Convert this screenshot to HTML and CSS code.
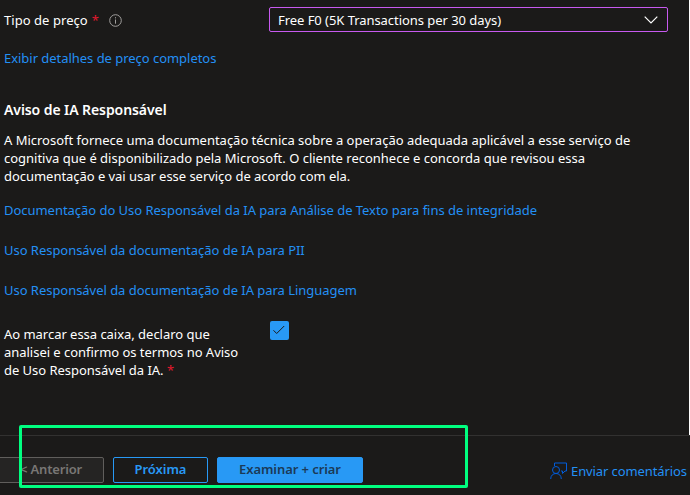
FILE: index.html
```html
<!DOCTYPE html>
<html lang="pt-BR">
<head>
<meta charset="utf-8">
<title>Criar recurso</title>
<link rel="stylesheet" href="styles.css">
</head>
<body>
<main class="content">
  <div class="field">
    <label class="field-label">Tipo de preço <span class="required">*</span>
      <svg class="info" viewBox="0 0 13 13"><circle cx="6.5" cy="6.5" r="5.8"/><path d="M6.5 5.5v4.2M6.5 3.2v1.2"/></svg>
    </label>
    <div class="select"><span class="select-value">Free F0 (5K Transactions per 30 days)</span>
      <svg class="chevron" viewBox="0 0 14 8"><path d="M.7.7 7 7l6.300-6.300"/></svg>
    </div>
  </div>
  <a class="link price">Exibir detalhes de preço completos</a>
  <h2 class="title">Aviso de IA Responsável</h2>
  <p class="notice">A Microsoft fornece uma documentação técnica sobre a operação adequada aplicável a esse serviço de<br>cognitiva que é disponibilizado pela Microsoft. O cliente reconhece e concorda que revisou essa<br><span class="notice-end">documentação e vai usar esse serviço de acordo com ela.</span></p>
  <nav class="docs">
    <a class="link">Documentação do Uso Responsável da IA para Análise de Texto para fins de integridade</a>
    <a class="link">Uso Responsável da documentação de IA para PII</a>
    <a class="link">Uso Responsável da documentação de IA para Linguagem</a>
  </nav>
  <div class="confirm">
    <p class="confirm-text">Ao marcar essa caixa, declaro que<br>analisei e confirmo os termos no Aviso<br>de Uso Responsável da IA. <span class="required">*</span></p>
    <span class="checkbox"><svg viewBox="0 0 19 19"><path d="M3.500 9.300l3.200 3.200 7.500-7.500"/></svg></span>
  </div>
</main>
<footer class="footer">
  <button class="btn prev">&lt; Anterior</button>
  <button class="btn next">Próxima</button>
  <button class="btn create">Examinar + criar</button>
  <a class="feedback"><svg class="person" viewBox="0 0 18 18"><path d="M4.500 4V1h12v8h-1.500l-2.500 2.500V9H11"/><circle cx="6" cy="8" r="3.500"/><path d="M.7 17c0-3.500 2.300-5.500 5.300-5.500s5.300 2 5.300 5.500"/></svg><span>Enviar comentários</span></a>
</footer>
<div class="highlight"></div>
</body>
</html>
```
FILE: styles.css
```css
* { box-sizing: border-box; }
body {
  margin: 0;
  width: 690px;
  height: 495px;
  overflow: hidden;
  display: flex;
  flex-direction: column;
  background: #1b1a19;
  color: #fff;
  font: 13px/18px "Noto Sans", "Open Sans", sans-serif;
  white-space: nowrap;
}
p, h2 { margin: 0; }
svg { fill: none; display: block; }
.content { height: 435px; padding: 7px 0 0 4px; border-right: 1px solid #fff; }
.field { display: flex; height: 25px; }
.field-label { display: flex; align-items: center; width: 265px; gap: 4px; letter-spacing: .05px; }
.required { color: #e3182d; }
.info { width: 13px; height: 13px; margin: 1px 0 0 6px; stroke: #a19f9d; }
.select { display: flex; align-items: center; justify-content: space-between; width: 399px; padding: 0 9px 0 8px; border: 1px solid #c85af0; border-radius: 2px; }
.select-value { letter-spacing: -.05px; }
.chevron { width: 14px; height: 8px; stroke: #fff; stroke-width: 1.2; }
.link { display: block; width: max-content; color: #2390f5; letter-spacing: -.035px; }
.price { margin-top: 17px; }
.title { width: max-content; margin-top: 34px; font-size: 14px; line-height: 18px; font-weight: 600; letter-spacing: -.08px; }
.notice { margin-top: 12px; letter-spacing: -.01px; }
.notice-end { letter-spacing: -.04px; }
.docs { display: grid; gap: 22px; margin-top: 16px; }
.confirm { display: flex; margin-top: 22px; }
.confirm-text { width: 266px; padding-top: 4px; letter-spacing: -.03px; }
.checkbox { width: 19px; height: 19px; border-radius: 2px; background: #2899f5; stroke: #1b1a19; }
.footer { display: flex; height: 60px; padding-top: 21px; border-top: 1px solid #323130; }
.btn { height: 26px; padding: 0 0 2px; margin-right: 9px; border: 1px solid #2899f5; border-radius: 2px; background: transparent; color: #2899f5; font: 600 13px/18px "Noto Sans", sans-serif; }
.prev { width: 106px; margin-left: -2px; border-color: #605e5c; background: #252423; color: #797775; letter-spacing: -.15px; }
.next { width: 95px; letter-spacing: -.05px; }
.create { width: 146px; background: #2899f5; color: #1b3a57; letter-spacing: -.08px; }
.feedback { display: flex; align-items: flex-start; gap: 3px; margin-left: 178px; padding-top: 5px; color: #2390f5; letter-spacing: -.1px; }
.person { width: 18px; height: 18px; stroke: #015cda; }
.highlight { position: absolute; left: 19px; top: 425px; width: 449px; height: 63px; border: 3px solid #00ff80; border-radius: 2px; }
```
